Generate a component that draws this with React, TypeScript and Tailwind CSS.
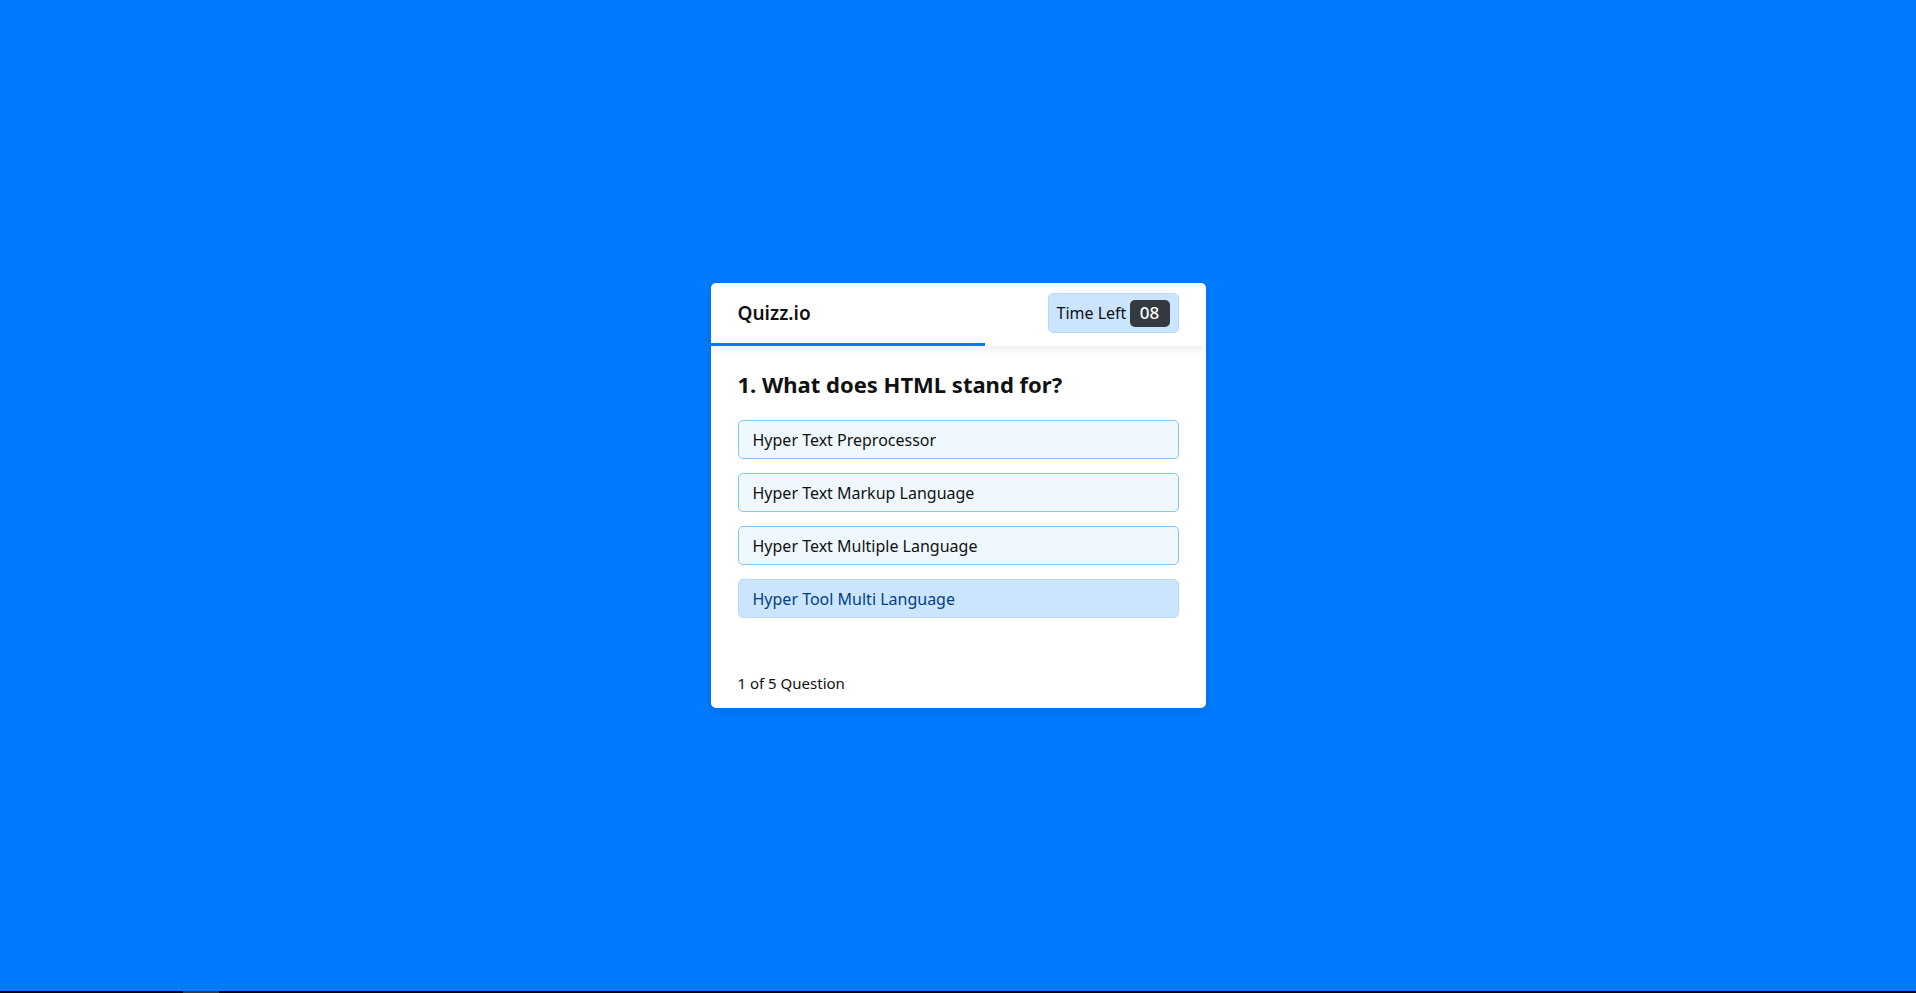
const options = [
  "Hyper Text Preprocessor",
  "Hyper Text Markup Language",
  "Hyper Text Multiple Language",
  "Hyper Tool Multi Language",
];

export default function App() {
  const selected = 3;

  return (
    <div className="flex h-screen flex-col font-['Noto_Sans',sans-serif]">
      <div className="flex flex-1 items-center justify-center bg-[#007bff]">
        <div className="w-[495px] overflow-hidden rounded-[5px] bg-white shadow-[0_4px_10px_rgba(0,0,0,0.12)]">
          {/* Header */}
          <div className="relative z-10 shadow-[0_3px_10px_rgba(0,0,0,0.08)]">
            <div className="flex h-[60px] items-center justify-between px-[27px]">
              <span className="text-[19px] font-semibold text-[#111]">Quizz.io</span>
              <div className="flex h-[40px] w-[131px] items-center justify-between rounded-[5px] border border-[#b8daff] bg-[#cce5ff] pl-[8px] pr-[8px]">
                <span className="text-[16px] text-[#111]">Time Left</span>
                <span className="flex h-[27px] w-[40px] items-center justify-center rounded-[5px] bg-[#343a40] text-[17px] font-medium text-white">
                  08
                </span>
              </div>
            </div>
            <div className="h-[3px] w-[274px] bg-[#007bff]" />
          </div>

          {/* Body */}
          <div className="px-[27px] pt-[21px]">
            <h2 className="text-[22px] font-bold leading-[34px] text-[#111]">
              1. What does HTML stand for?
            </h2>
            <ul className="mt-[19px] flex flex-col gap-[14px] pb-[38px]">
              {options.map((opt, i) => (
                <li
                  key={opt}
                  className={`flex h-[39px] items-center rounded-[5px] border px-[14px] text-[16px] ${
                    i === selected
                      ? "border-[#b8daff] bg-[#cce5ff] text-[#004085]"
                      : "border-[#84c5fe] bg-[#f0f8ff] text-[#111]"
                  }`}
                >
                  {opt}
                </li>
              ))}
            </ul>
          </div>

          {/* Footer */}
          <div className="flex h-[52px] items-center px-[27px] pt-[2px] text-[15px] text-[#111]">
            1 of 5 Question
          </div>
        </div>
      </div>
      <div className="flex h-[2px] bg-black">
        <div className="ml-[183px] w-[36px] bg-[#3a3a3a]" />
      </div>
    </div>
  );
}
